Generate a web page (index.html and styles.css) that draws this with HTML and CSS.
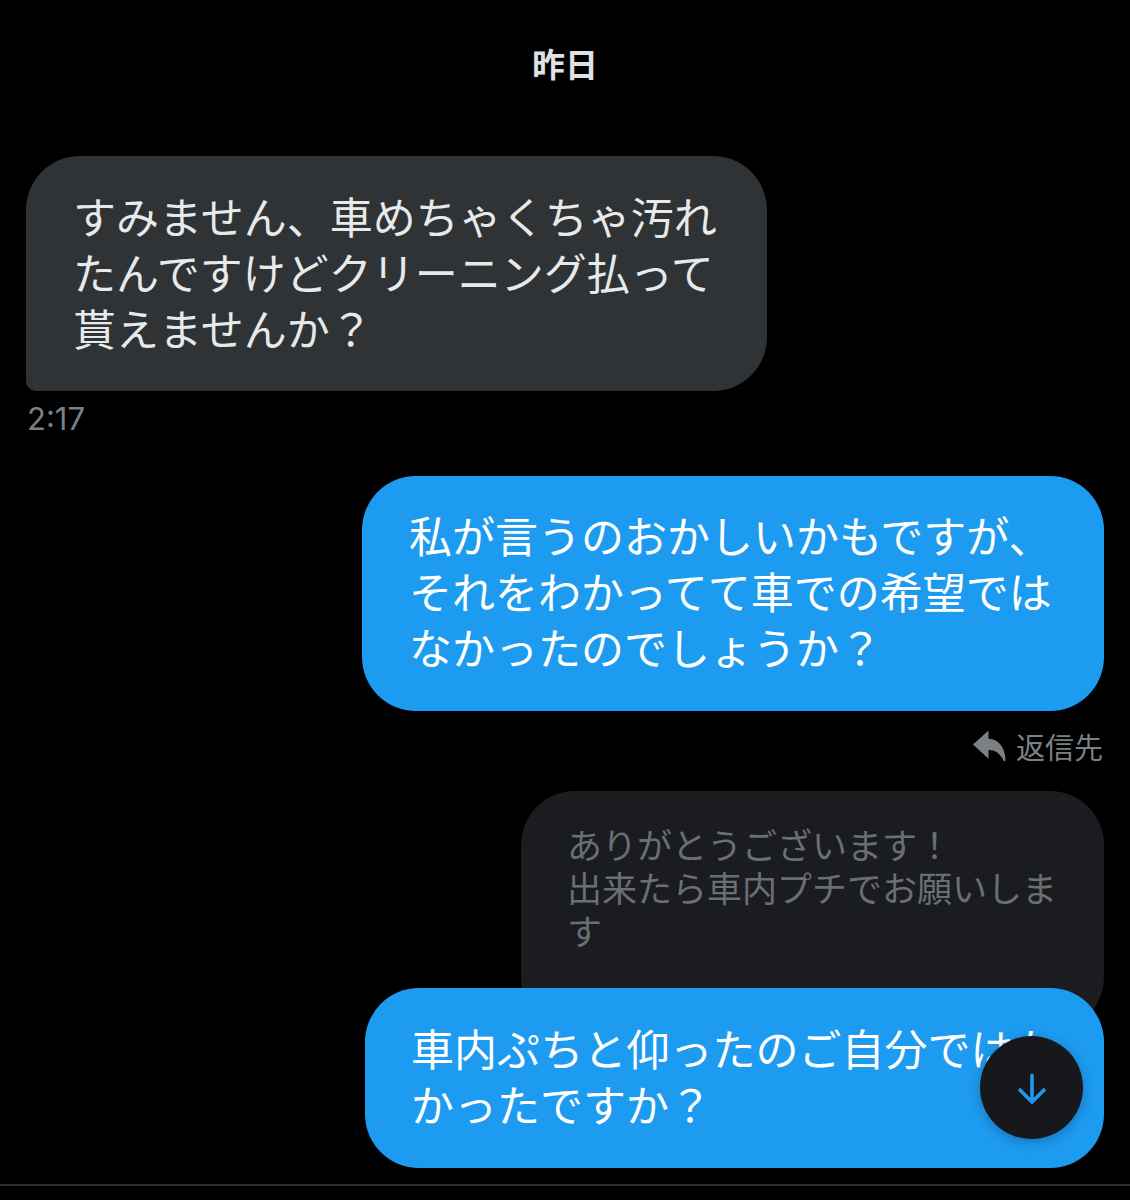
FILE: index.html
```html
<!DOCTYPE html>
<html lang="ja">
<head>
  <meta charset="UTF-8">
  <title>メッセージ</title>
  <link rel="stylesheet" href="styles.css">
</head>
<body>
  <div class="chat">
    <div class="date">昨日</div>

    <div class="bubble received">すみません、車めちゃくちゃ汚れたんですけどクリーニング払って貰えませんか？</div>
    <div class="time">2:17</div>

    <div class="bubble sent first">私が言うのおかしいかもですが、<br>それをわかってて車での希望ではなかったのでしょうか？</div>

    <div class="reply-label">
      <svg class="reply-icon" viewBox="0 0 36 34"><path d="M17 1 1 15.500 17 30V21c7 0 12 3 16 12 1 0 1.500-.5 1.500-2C34 19 28 10 17 9.500Z"/></svg>
      <span>返信先</span>
    </div>

    <div class="quote">ありがとうございます！<br>出来たら車内プチでお願いします</div>

    <div class="reply-wrap">
      <div class="bubble sent last">車内ぷちと仰ったのご自分ではなかったですか？</div>
      <div class="scroll-btn">
        <svg viewBox="0 0 32 32"><path d="M16 2V30M3 17 16 30 29 17"/></svg>
      </div>
    </div>
  </div>
  <div class="bottom-line"></div>
</body>
</html>
```

FILE: styles.css
```css
html, body {
  margin: 0;
  height: 1200px;
  overflow: hidden;
  background: #000;
}
body {
  font-family: "Noto Sans CJK JP", "Noto Sans", sans-serif;
  position: relative;
}
.chat {
  display: flex;
  flex-direction: column;
  padding: 0 26px;
}
.date {
  height: 130px;
  line-height: 126px;
  text-align: center;
  color: #dfe1e2;
  font-size: 33px;
  font-weight: 700;
}
.bubble {
  box-sizing: border-box;
  padding: 31px 47px 36px 47px;
  font-size: 43px;
  line-height: 56px;
  border-radius: 54px;
}
.received {
  width: 741px;
  margin-top: 26px;
  background: #2f3336;
  color: #e7e9ea;
  border-bottom-left-radius: 10px;
}
.time {
  margin-top: 12px;
  height: 32px;
  padding-left: 1px;
  line-height: 32px;
  font-family: Inter, "Liberation Sans", sans-serif;
  font-size: 31px;
  color: #7b8085;
}
.sent {
  background: #1d9bf0;
  color: #fff;
  align-self: flex-end;
}
.first {
  width: 742px;
  margin-top: 41px;
  padding-top: 30px;
  padding-bottom: 37px;
}
.reply-label {
  align-self: flex-end;
  display: flex;
  align-items: center;
  gap: 9px;
  height: 40px;
  margin-top: 15px;
  margin-bottom: 2px;
  padding-right: 1px;
  color: #7b8085;
  font-size: 29px;
}
.reply-icon {
  width: 35px;
  height: 34px;
  fill: #7b8085;
}
.quote {
  box-sizing: border-box;
  align-self: flex-end;
  width: 583px;
  height: 240px;
  margin-top: 23px;
  padding: 31px 44px 31px 46px;
  background: #1a1c1f;
  color: #6a6f73;
  font-size: 35px;
  line-height: 43px;
  border-radius: 54px;
}
.reply-wrap {
  position: relative;
  align-self: flex-end;
  width: 739px;
  margin-top: -43px;
}
.last {
  width: 100%;
  height: 180px;
  padding-left: 46px;
}
.scroll-btn {
  position: absolute;
  right: 21px;
  top: 48px;
  width: 103px;
  height: 103px;
  border-radius: 50%;
  background: #16181c;
  box-shadow: 0 3px 12px rgba(0, 0, 0, .25);
  display: flex;
  align-items: center;
  justify-content: center;
}
.scroll-btn svg {
  width: 32px;
  height: 32px;
  fill: none;
  stroke: #1d9bf0;
  stroke-width: 3.5;
}
.bottom-line {
  position: absolute;
  left: 0;
  right: 0;
  top: 1184px;
  height: 2px;
  background: #2a2c2e;
}
```
